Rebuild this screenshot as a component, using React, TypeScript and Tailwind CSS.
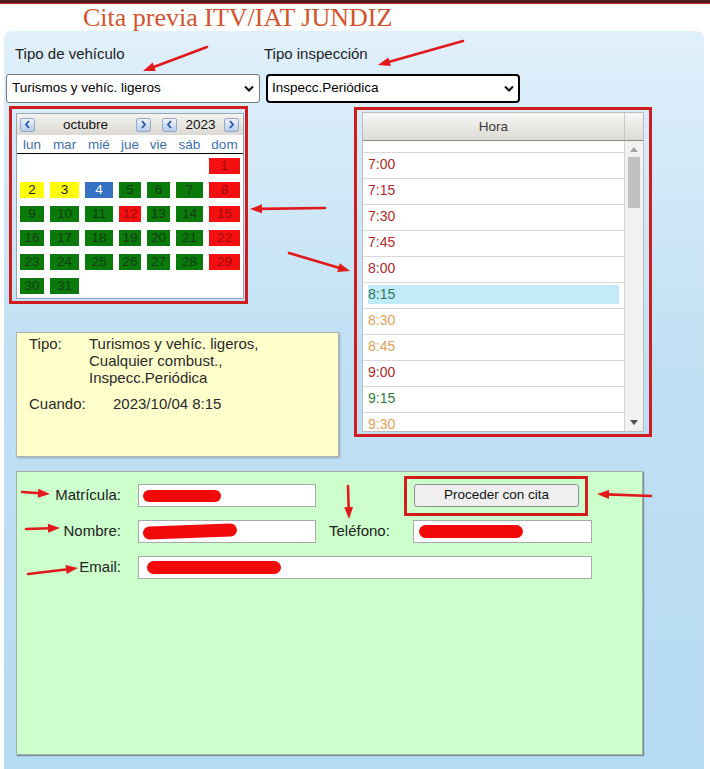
import React from "react";

type Arrow = [number, number, number, number];

const ARROWS: Arrow[] = [
  [207, 47, 143, 71],
  [463, 41, 378, 65],
  [325, 208, 250, 209],
  [289, 253, 350, 271],
  [22, 492, 50, 494],
  [26, 529, 60, 528],
  [28, 574, 78, 568],
  [348, 486, 349, 519],
  [651, 496, 597, 494],
];

function Arrows() {
  return (
    <svg className="absolute left-0 top-0 pointer-events-none" width={710} height={769}>
      {ARROWS.map(([x1, y1, x2, y2], i) => {
        const dx = x2 - x1;
        const dy = y2 - y1;
        const L = Math.hypot(dx, dy);
        const ux = dx / L;
        const uy = dy / L;
        const hl = 12;
        const hw = 4.5;
        const bx = x2 - ux * hl;
        const by = y2 - uy * hl;
        const px = -uy;
        const py = ux;
        return (
          <g key={i}>
            <line x1={x1} y1={y1} x2={bx + ux * 2} y2={by + uy * 2} stroke="#e1191b" strokeWidth={2.6} strokeLinecap="round" />
            <polygon
              points={`${x2},${y2} ${bx + px * hw},${by + py * hw} ${bx - px * hw},${by - py * hw}`}
              fill="#e1191b"
            />
          </g>
        );
      })}
    </svg>
  );
}

function Chevron() {
  return (
    <svg width="10" height="7" viewBox="0 0 10 7">
      <path d="M1 1.5 L5 5.5 L9 1.5" stroke="#111" strokeWidth="2" fill="none" />
    </svg>
  );
}

function NavBtn({ dir, className = "" }: { dir: "l" | "r"; className?: string }) {
  return (
    <div
      className={
        "w-[15px] h-[14px] shrink-0 rounded-[2px] border border-[#93a9cc] bg-linear-to-b from-[#eef3fb] to-[#b9cbe8] flex items-center justify-center " +
        className
      }
    >
      <svg width="7" height="9" viewBox="0 0 7 9">
        {dir === "l" ? (
          <path d="M5 1 L2 4.5 L5 8" stroke="#2457a8" strokeWidth="1.8" fill="none" />
        ) : (
          <path d="M2 1 L5 4.5 L2 8" stroke="#2457a8" strokeWidth="1.8" fill="none" />
        )}
      </svg>
    </div>
  );
}

type DayC = "g" | "r" | "y" | "b";
const dayColors: Record<number, DayC> = {
  1: "r", 2: "y", 3: "y", 4: "b", 5: "g", 6: "g", 7: "g", 8: "r",
  9: "g", 10: "g", 11: "g", 12: "r", 13: "g", 14: "g", 15: "r",
  16: "g", 17: "g", 18: "g", 19: "g", 20: "g", 21: "g", 22: "r",
  23: "g", 24: "g", 25: "g", 26: "g", 27: "g", 28: "g", 29: "r",
  30: "g", 31: "g",
};

const cellClass: Record<DayC, string> = {
  g: "bg-[#0a7a0a] text-[#143c14]",
  r: "bg-[#f41010] text-[#9c0c0c]",
  y: "bg-[#ffff00] text-[#222]",
  b: "bg-[#3572c3] text-white",
};

function Calendar() {
  const names = ["lun", "mar", "mié", "jue", "vie", "sáb", "dom"];
  const cells: (number | null)[] = [null, null, null, null, null, null];
  for (let d = 1; d <= 31; d++) cells.push(d);
  while (cells.length < 42) cells.push(null);
  return (
    <div className="w-[239px] h-[198px] border-[3px] border-[#d01c1c] pt-[4px] pl-[4px] mt-[1px]">
      <div className="w-[228px] h-[186px] border border-[#9aa6b6] bg-white flex flex-col">
        <div className="h-[21px] flex items-center bg-linear-to-b from-[#f4f3ef] to-[#dbd9d1] text-[13.5px] text-[#111]">
          <NavBtn dir="l" className="ml-[3px]" />
          <div className="w-[101px] text-center leading-[16px]">octubre</div>
          <NavBtn dir="r" />
          <NavBtn dir="l" className="ml-[11px]" />
          <div className="w-[47px] text-center leading-[16px]">2023</div>
          <NavBtn dir="r" />
        </div>
        <div className="h-[19px] border-b border-black grid grid-cols-[30px_35px_34px_28px_29px_33px_37px] text-[13.5px] text-[#3d6fb0]">
          {names.map((n) => (
            <div key={n} className="flex items-center justify-center">
              {n}
            </div>
          ))}
        </div>
        <div className="grid grid-cols-[30px_35px_34px_28px_29px_33px_37px] auto-rows-[24px] text-[13.5px]">
          {cells.map((d, i) => (
            <div key={i} className="flex items-center px-[3px]">
              {d !== null && (
                <div className={"h-[16px] w-full text-center leading-[16px] " + cellClass[dayColors[d]]}>{d}</div>
              )}
            </div>
          ))}
        </div>
      </div>
    </div>
  );
}

type TC = "r" | "g" | "g2" | "o";
const times: [string, TC, boolean][] = [
  ["7:00", "r", false],
  ["7:15", "r", false],
  ["7:30", "r", false],
  ["7:45", "r", false],
  ["8:00", "r", false],
  ["8:15", "g", true],
  ["8:30", "o", false],
  ["8:45", "o", false],
  ["9:00", "r", false],
  ["9:15", "g2", false],
  ["9:30", "o", false],
];
const timeColor: Record<TC, string> = {
  r: "text-[#b42a2a]",
  g: "text-[#2a7a58]",
  g2: "text-[#2f7a3a]",
  o: "text-[#e0a158]",
};

function TimePicker() {
  return (
    <div className="w-[298px] h-[330px] border-[3px] border-[#d01c1c] pt-[2px] pl-[5px] mt-[2px] ml-[16px]">
      <div className="w-[282px] h-[320px] border border-[#bdbdbd] bg-white flex flex-col">
        <div className="flex h-[28px] shrink-0 border-b border-[#8a8a8a] bg-linear-to-b from-[#f7f7f5] to-[#dcdbd5]">
          <div className="w-[262px] border-r border-[#c9c9c9] flex items-center justify-center pt-[2px] text-[13.5px] text-[#3b3b3b]">
            Hora
          </div>
          <div className="flex-1" />
        </div>
        <div className="flex h-[290px] overflow-hidden">
          <div className="w-[262px] h-[290px] border-r border-[#d2d2d2] overflow-hidden">
            <div className="h-[12px] border-b border-[#d9d9d9]" />
            {times.map(([t, c, sel]) => (
              <div key={t} className="h-[26px] border-b border-[#d9d9d9] px-[5px] pt-[2px]">
                <div
                  className={
                    "h-[19px] leading-[19px] text-[14px] " + timeColor[c] + (sel ? " bg-[#c1ebf8]" : "")
                  }
                >
                  {t}
                </div>
              </div>
            ))}
          </div>
          <div className="flex-1 bg-[#f1f1f1] flex flex-col items-center">
            <div className="h-[16px] flex items-center justify-center">
              <svg width="8" height="5" viewBox="0 0 8 5">
                <path d="M0 5 L4 0 L8 5 Z" fill="#a3a3a3" />
              </svg>
            </div>
            <div className="w-[12px] h-[51px] bg-[#c1c1c1]" />
            <div className="flex-1" />
            <div className="h-[17px] flex items-center justify-center">
              <svg width="8" height="5" viewBox="0 0 8 5">
                <path d="M0 0 L8 0 L4 5 Z" fill="#505050" />
              </svg>
            </div>
          </div>
        </div>
      </div>
    </div>
  );
}

function Blob({ w, h = 13, ml = 4, rot = 0 }: { w: string; h?: number; ml?: number; rot?: number }) {
  return (
    <span
      className={"block rounded-full bg-[#f20a0a] " + w}
      style={{ height: h, marginLeft: ml, transform: rot ? `rotate(${rot}deg)` : undefined }}
    />
  );
}

function Field({ w, children }: { w: string; children?: React.ReactNode }) {
  return <div className={"h-[23px] bg-white border border-[#a9a9a9] flex items-center " + w}>{children}</div>;
}

export default function App() {
  return (
    <div className="relative w-[710px] min-h-[769px] bg-white flex flex-col font-['Liberation_Sans',Arial,sans-serif] text-[#222] overflow-hidden">
      <div className="h-[3px] bg-[#4b1d1d]" />
      <div className="h-[1px] bg-[#cf2a2a]" />
      <div className="h-[27px] pl-[83px] font-['Liberation_Serif','Times_New_Roman',serif] text-[26px] leading-[27px] text-[#d4522c]">
        Cita previa ITV/IAT JUNDIZ
      </div>
      <div className="flex-1 ml-[4px] mr-[6px] rounded-t-[8px] bg-linear-to-b from-[#e0f0fb] via-[#c0e0f4] via-45% to-[#b5dbf2] pt-[14px] pb-[14px]">
        <div className="flex">
          <div className="flex flex-col ml-[2px] w-[254px]">
            <div className="ml-[9px] text-[15px] leading-[17px]">Tipo de vehículo</div>
            <div className="mt-[12px] h-[29px] bg-white border border-[#767676] rounded-[3px] flex items-center pl-[5px] pr-[5px] text-[13.5px] text-black">
              <span className="flex-1">Turismos y vehíc. ligeros</span>
              <Chevron />
            </div>
          </div>
          <div className="flex flex-col ml-[6px] w-[254px]">
            <div className="-ml-[2px] text-[15px] leading-[17px]">Tipo inspección</div>
            <div className="mt-[12px] h-[29px] bg-white border-2 border-black rounded-[4px] flex items-center pl-[4px] pr-[4px] text-[13.5px] text-black">
              <span className="flex-1">Inspecc.Periódica</span>
              <Chevron />
            </div>
          </div>
        </div>

        <div className="flex items-start mt-[2px]">
          <div className="flex flex-col ml-[5px] w-[329px]">
            <Calendar />
            <div className="mt-[28px] ml-[7px] w-[323px] h-[125px] bg-[#ffffcc] border border-[#b4b4a8] shadow-[1px_1px_2px_rgba(0,0,0,0.25)] pt-[2px] pl-[12px] text-[15px] leading-[17px] text-[#2a2a2a]">
              <div className="flex">
                <div className="w-[60px]">Tipo:</div>
                <div>
                  Turismos y vehíc. ligeros,
                  <br />
                  Cualquier combust.,
                  <br />
                  Inspecc.Periódica
                </div>
              </div>
              <div className="flex mt-[9px]">
                <div className="w-[84px]">Cuando:</div>
                <div>2023/10/04 8:15</div>
              </div>
            </div>
          </div>
          <TimePicker />
        </div>

        <div className="relative mt-[14px] ml-[12px] w-[627px] h-[284px] bg-[#ccffcc] border border-[#a2aea2] shadow-[1px_1px_1px_rgba(0,0,0,0.35)] pt-[12px] text-[15px] text-[#222]">
          <div className="flex items-center h-[23px]">
            <div className="w-[104px] text-right">Matrícula:</div>
            <div className="ml-[17px]">
              <Field w="w-[178px]">
                <Blob w="w-[78px]" h={12} />
              </Field>
            </div>
            <button className="ml-[98px] w-[165px] h-[23px] bg-[#efefef] border border-[#8f8f8f] rounded-[3px] text-[13.5px] text-[#111]">
              Proceder con cita
            </button>
          </div>
          <div className="flex items-center h-[23px] mt-[13px]">
            <div className="w-[104px] text-right">Nombre:</div>
            <div className="ml-[17px]">
              <Field w="w-[178px]">
                <Blob w="w-[94px]" h={13} rot={-2} />
              </Field>
            </div>
            <div className="ml-[13px] w-[84px]">Teléfono:</div>
            <Field w="w-[179px]">
              <Blob w="w-[104px]" h={13} ml={5} />
            </Field>
          </div>
          <div className="flex items-center h-[23px] mt-[13px]">
            <div className="w-[104px] text-right">Email:</div>
            <div className="ml-[17px]">
              <Field w="w-[454px]">
                <Blob w="w-[134px]" h={13} ml={8} />
              </Field>
            </div>
          </div>
          <div className="absolute left-[387px] top-[4px] w-[184px] h-[40px] border-[3px] border-[#d01c1c] pointer-events-none" />
        </div>
      </div>
      <Arrows />
    </div>
  );
}
